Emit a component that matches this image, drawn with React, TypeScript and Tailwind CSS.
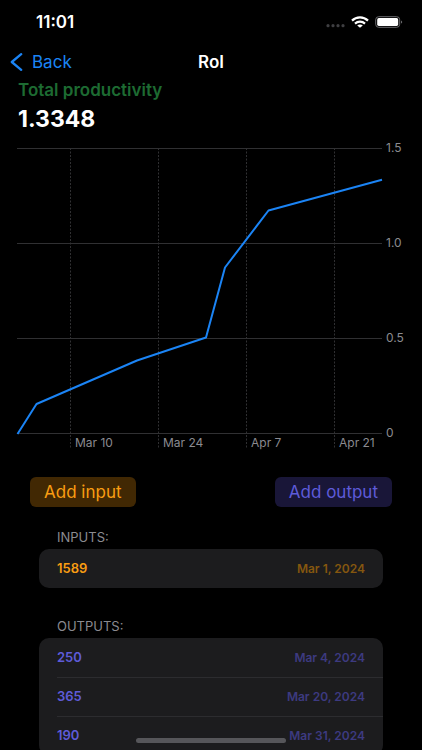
type Entry = { value: string; date: string };

const inputs: Entry[] = [{ value: "1589", date: "Mar 1, 2024" }];

const outputs: Entry[] = [
  { value: "250", date: "Mar 4, 2024" },
  { value: "365", date: "Mar 20, 2024" },
  { value: "190", date: "Mar 31, 2024" },
];

const yTicks = [
  { y: 9, label: "1.5" },
  { y: 104, label: "1.0" },
  { y: 199, label: "0.5" },
  { y: 294, label: "0" },
];

const xTicks = [
  { x: 71, label: "Mar 10" },
  { x: 159, label: "Mar 24" },
  { x: 247, label: "Apr 7" },
  { x: 335, label: "Apr 21" },
];

function StatusBar() {
  return (
    <div className="flex h-11 items-center justify-between pr-[19px] pl-9">
      <span className="text-[17px] leading-6 font-semibold text-white">11:01</span>
      <div className="flex items-center gap-1.5">
        <svg width="20" height="12" viewBox="0 0 20 12" fill="#3f3f42" aria-hidden="true">
          <circle cx="3" cy="9.7" r="1.6" />
          <circle cx="8" cy="9.7" r="1.6" />
          <circle cx="13" cy="9.7" r="1.6" />
          <circle cx="18" cy="9.7" r="1.6" />
        </svg>
        <svg width="18" height="12" viewBox="0 0 18 12" fill="none" stroke="#fff" strokeWidth="2.2" aria-hidden="true">
          <path d="M1 4.6C5.4.3 12.6.3 17 4.6" />
          <path d="M4 7.6c2.8-2.6 7.2-2.6 10 0" />
          <path d="M9 11.8 6.2 9.5c1.6-1.4 4-1.4 5.6 0z" fill="#fff" stroke="none" />
        </svg>
        <svg width="28" height="12" viewBox="0 0 28 12" fill="none" aria-hidden="true">
          <rect x="0.7" y="0.7" width="24" height="10.6" rx="3" stroke="#6b6b6e" />
          <rect x="2.2" y="2.1" width="21" height="7.8" rx="1.6" fill="#fff" />
          <path d="M26 4.4c1.6.5 1.6 2.7 0 3.2z" fill="#6b6b6e" />
        </svg>
      </div>
    </div>
  );
}

function ProductivityChart() {
  return (
    <svg viewBox="0 0 422 314" className="block w-full" role="img" aria-label="Total productivity over time">
      {yTicks.map((t) => (
        <g key={t.label}>
          <line x1="17" x2="382" y1={t.y - 0.5} y2={t.y - 0.5} stroke="#303032" />
          <text x="386" y={t.y + 3} fill="#8b8b90" className="text-[12px]">
            {t.label}
          </text>
        </g>
      ))}
      {xTicks.map((t) => (
        <g key={t.label}>
          <line x1={t.x - 0.5} x2={t.x - 0.5} y1="8" y2="309" stroke="#303032" strokeDasharray="2 1.5" />
          <text x={t.x + 4} y="307" fill="#8b8b90" className="text-[12px]">
            {t.label}
          </text>
        </g>
      ))}
      <polyline
        points="17.5,294 36.5,264 137,220.5 206,197.5 225,127.5 268.5,70.5 382,39.7"
        fill="none"
        stroke="#1b84f5"
        strokeWidth="2"
        strokeLinejoin="round"
      />
    </svg>
  );
}

function EntryList({
  title,
  entries,
  valueClass,
  dateClass,
}: {
  title: string;
  entries: Entry[];
  valueClass: string;
  dateClass: string;
}) {
  return (
    <section className="mx-[39px]">
      <h2 className="px-[18px] pb-0.5 text-[13px] leading-5 text-[#8b8b90]">{title}</h2>
      <ul className="overflow-hidden rounded-[10px] bg-[#1c1c1e]">
        {entries.map((e, i) => (
          <li key={e.date} className="pl-[18px]">
            <div
              className={
                i > 0
                  ? "flex h-[39px] items-center justify-between border-t border-[#2c2c2f] pr-[18px]"
                  : "flex h-[39px] items-center justify-between pr-[18px]"
              }
            >
              <span className={`text-[13px] font-semibold ${valueClass}`}>{e.value}</span>
              <span className={`text-[12px] font-semibold ${dateClass}`}>{e.date}</span>
            </div>
          </li>
        ))}
      </ul>
    </section>
  );
}

export default function App() {
  return (
    <main className="relative h-screen overflow-hidden bg-black font-['Inter','Liberation_Sans',sans-serif] text-white">
      <StatusBar />
      <header className="grid h-9 grid-cols-3 items-center px-2.5">
        <button type="button" className="flex items-center gap-2 text-[17px] leading-6 text-[#1b84f5]">
          <svg width="14" height="18" viewBox="0 0 14 18" fill="none" stroke="currentColor" strokeWidth="2.3" strokeLinecap="round" strokeLinejoin="round" aria-hidden="true">
            <path d="M11.2 1.2 1.8 9l9.4 7.8" />
          </svg>
          Back
        </button>
        <h1 className="text-center text-[17px] leading-6 font-semibold">RoI</h1>
      </header>
      <div className="px-[18px]">
        <p className="text-[17px] leading-5 font-semibold text-[#1d6b32]">Total productivity</p>
        <p className="pb-0.5 text-[23px] leading-[38px] font-bold">1.3348</p>
      </div>
      <ProductivityChart />
      <div className="flex justify-between pt-[23px] pr-[30px] pb-5 pl-[30px]">
        <button type="button" className="h-[30px] rounded-md bg-[#412803] px-3.5 text-[17px] leading-6 text-[#f99d12]">
          Add input
        </button>
        <button type="button" className="h-[30px] rounded-md bg-[#191638] px-3.5 text-[17px] leading-6 text-[#5e5bd8]">
          Add output
        </button>
      </div>
      <div className="flex flex-col gap-7">
        <EntryList title="INPUTS:" entries={inputs} valueClass="text-[#f99d12]" dateClass="text-[#85570f]" />
        <EntryList title="OUTPUTS:" entries={outputs} valueClass="text-[#5e5bd8]" dateClass="text-[#3d3a80]" />
      </div>
      <div className="absolute bottom-[7px] left-1/2 h-[5px] w-[150px] -translate-x-1/2 rounded-full bg-[#56565a]" />
    </main>
  );
}
